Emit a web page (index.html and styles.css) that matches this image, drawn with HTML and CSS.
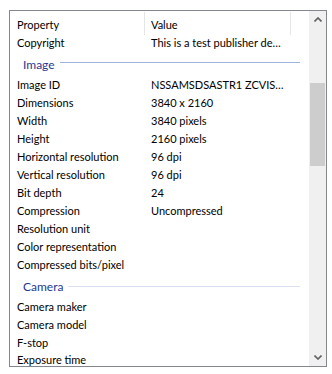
FILE: index.html
```html
<html>
<head>
<meta http-equiv="content-type" content="text/html; charset=utf-8">
<link rel="stylesheet" href="styles.css">
<title>Details</title>
</head>
<body>
<div class=props>
<div class=pane>
<div class=head>
<div class="hcell name">Property</div><div class="hcell value">Value</div><div class="hcell rest"></div>
</div>
<div class=row><div class=name>Copyright</div><div class=value>This is a test publisher de&hellip;</div></div>
<div class=group><span>Image</span><i class="rule strong"></i></div>
<div class=row><div class=name>Image ID</div><div class=value>NSSAMSDSASTR1 ZCVIS&hellip;</div></div>
<div class=row><div class=name>Dimensions</div><div class=value>3840 x 2160</div></div>
<div class=row><div class=name>Width</div><div class=value>3840 pixels</div></div>
<div class=row><div class=name>Height</div><div class=value>2160 pixels</div></div>
<div class=row><div class=name>Horizontal resolution</div><div class=value>96 dpi</div></div>
<div class=row><div class=name>Vertical resolution</div><div class=value>96 dpi</div></div>
<div class=row><div class=name>Bit depth</div><div class=value>24</div></div>
<div class=row><div class=name>Compression</div><div class=value>Uncompressed</div></div>
<div class=row><div class=name>Resolution unit</div><div class=value></div></div>
<div class=row><div class=name>Color representation</div><div class=value></div></div>
<div class=row><div class=name>Compressed bits/pixel</div><div class=value></div></div>
<div class=group><span>Camera</span><i class="rule faint"></i></div>
<div class=row><div class=name>Camera maker</div><div class=value></div></div>
<div class=row><div class=name>Camera model</div><div class=value></div></div>
<div class=row><div class=name>F-stop</div><div class=value></div></div>
<div class="row last"><div class=name>Exposure time</div><div class=value></div></div>
</div>
<div class=scrollbar>
<div class=sbtn><svg width="8" height="5" viewBox="0 0 8 5"><path d="M0.5 4.5 L4 1 L7.5 4.5" fill="none" stroke="#606060" stroke-width="1.6"/></svg></div>
<div class=track><div class=thumb></div></div>
<div class=sbtn><svg width="8" height="5" viewBox="0 0 8 5"><path d="M0.5 0.5 L4 4 L7.5 0.5" fill="none" stroke="#606060" stroke-width="1.6"/></svg></div>
</div>
</div>
</body>
</html>
```

FILE: styles.css
```css
html,body{margin:0;padding:0;background:#ffffff}
body{font-family:"Lato","Noto Sans","Liberation Sans",sans-serif;font-size:11px;color:#000000}
.props{margin:10px 0 0 9px;width:318px;height:357px;box-sizing:border-box;border:1px solid #828790;display:flex;overflow:hidden}
.pane{flex:1;overflow:hidden}
.head{display:flex;height:23px}
.hcell{box-sizing:border-box;line-height:23px;padding-top:1px;border-right:1px solid #e5e5e5;margin-top:1px;height:23px}
.hcell.rest{flex:1;border-right:0}
.name{width:135px;box-sizing:border-box;padding-left:7px;white-space:nowrap;overflow:hidden}
.value{width:146px;box-sizing:border-box;padding-left:6px;white-space:nowrap;overflow:hidden}
.row{display:flex;height:18px;line-height:18px}
.row.last{height:14px;line-height:16px;overflow:hidden}
.group{display:flex;align-items:center;height:24px;padding-left:13px;padding-right:9px;color:#1e3991;font-size:12px}
.group span{padding-right:5px}
.rule{flex:1;height:1px}
.strong{background:#9fb3df;margin-bottom:4px}
.faint{background:#d9e0f2}
.scrollbar{width:17px;background:#f0f0f0;display:flex;flex-direction:column}
.sbtn{height:17px;display:flex;align-items:center;justify-content:center}
.track{flex:1;padding-top:55px}
.thumb{margin-left:1px;width:15px;height:83px;background:#cdcdcd}
```
